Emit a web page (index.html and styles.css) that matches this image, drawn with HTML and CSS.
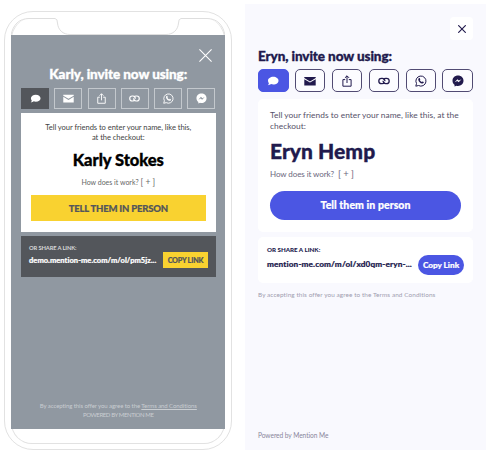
FILE: index.html
```html
<!DOCTYPE html>
<html lang="en">
<head>
<meta charset="utf-8">
<title>Invite friends</title>
<link rel="stylesheet" href="styles.css">
</head>
<body>
<svg class="defs" width="0" height="0" aria-hidden="true">
  <symbol id="chat" viewBox="0 0 12 12"><path fill="currentColor" d="M6.3 1.8C9.200 1.800 11.500 3.500 11.500 5.700S9.200 9.500 6.300 9.500C5.500 9.500 4.700 9.400 4 9.100C3.200 9.800 2 10.300.8 10.300C1.500 9.700 1.900 8.900 1.900 8.200C1.300 7.500 1 6.600 1 5.700C1 3.500 3.400 1.800 6.300 1.800Z"/></symbol>
  <symbol id="mail" viewBox="0 0 12 12"><path fill="currentColor" d="M.3 1.900H11.700V3L6 6.400L.3 3ZM.3 4.200L6 7.600L11.700 4.200V10.400H.3Z"/></symbol>
  <symbol id="share" viewBox="0 0 12 12"><path fill="none" stroke="currentColor" stroke-width="1" d="M4.200 4.600H1.900V11.200H10.100V4.600H7.800M6 8V.9M3.900 2.900L6 .8L8.100 2.900"/></symbol>
  <symbol id="link" viewBox="0 0 12 12"><g fill="none" stroke="currentColor" stroke-width="1.300"><path d="M6.700 7.600C6.100 8.400 5.200 8.700 4.100 8.700H3.500A2.700 2.700 0 0 1 3.500 3.300H4.300A2.700 2.700 0 0 1 6.900 6.200"/><path d="M5.300 4.400C5.900 3.600 6.800 3.300 7.900 3.300H8.500A2.700 2.700 0 0 1 8.500 8.700H7.700A2.700 2.700 0 0 1 5.100 5.800"/></g></symbol>
  <symbol id="whatsapp" viewBox="0 0 12 12"><path fill="none" stroke="currentColor" stroke-width="1" d="M.8 11.200L1.500 8.500A5.050 5.050 0 1 1 3.500 10.500Z"/><path fill="currentColor" d="M4.100 3.100H4.700L5.300 4.500L4.800 5.200C5.200 6 5.900 6.700 6.800 7.100L7.400 6.400L8.800 7.100C8.800 8.200 8 8.600 7.200 8.500C5.300 8.200 3.700 6.600 3.300 4.900C3.200 4.100 3.600 3.400 4.100 3.100Z"/></symbol>
  <symbol id="messenger" viewBox="0 0 12 12"><path fill="currentColor" fill-rule="evenodd" d="M6 .5C9.100.500 11.500 2.700 11.500 5.700S9.100 10.900 6 10.900C5.400 10.900 4.900 10.800 4.400 10.700L2.600 11.500L2.500 9.700C1.200 8.700.5 7.300.5 5.700C.5 2.700 2.900.500 6 .5ZM2.600 7.300L5.200 5.900L6.700 7.300L9.500 4.300L6.900 5.600L5.400 4.200Z"/></symbol>
  <symbol id="close" viewBox="0 0 12 12"><path fill="none" stroke="currentColor" d="M.4.4L11.600 11.600M11.600.4L.4 11.600"/></symbol>
</svg>

<main class="stage">
  <div class="phone">
    <div class="bezel">
      <svg class="notch" viewBox="0 0 214 17" width="214" height="17"><path fill="none" stroke="#dedede" d="M0 17C2 7 8 .5 18 .5H44Q46.500.800 46.500 5C47 12 52 16.500 59 16.500H155C162 16.500 167 12 167.500 5Q167.500.800 170 .5H196C206 .5 212 7 214 17"/></svg>
      <section class="offer offer-classic">
        <svg class="close"><use href="#close"/></svg>
        <h1 class="title">Karly, invite now using:</h1>
        <nav class="tabs">
          <span class="tab active"><svg><use href="#chat"/></svg></span>
          <span class="tab"><svg><use href="#mail"/></svg></span>
          <span class="tab"><svg><use href="#share"/></svg></span>
          <span class="tab"><svg><use href="#link"/></svg></span>
          <span class="tab"><svg><use href="#whatsapp"/></svg></span>
          <span class="tab"><svg><use href="#messenger"/></svg></span>
        </nav>
        <div class="card">
          <p class="intro">Tell your friends to enter your name, like this,<br>at the checkout:</p>
          <h2 class="name">Karly Stokes</h2>
          <p class="how">How does it work?<span class="plus">[ + ]</span></p>
          <div class="cta">TELL THEM IN PERSON</div>
        </div>
        <div class="linkbox">
          <div class="linktext">
            <p class="label">OR SHARE A LINK:</p>
            <p class="url">demo.mention-me.com/m/ol/pm5jz...</p>
          </div>
          <div class="copy">COPY LINK</div>
        </div>
        <footer class="legal">
          <p>By accepting this offer you agree to the <u>Terms and Conditions</u></p>
          <p class="powered">POWERED BY MENTION ME</p>
        </footer>
      </section>
    </div>
  </div>

  <section class="offer offer-modern">
    <div class="closebox"><svg class="close"><use href="#close"/></svg></div>
    <h1 class="title">Eryn, invite now using:</h1>
    <nav class="tabs">
      <span class="tab active"><svg><use href="#chat"/></svg></span>
      <span class="tab"><svg><use href="#mail"/></svg></span>
      <span class="tab"><svg><use href="#share"/></svg></span>
      <span class="tab"><svg><use href="#link"/></svg></span>
      <span class="tab"><svg><use href="#whatsapp"/></svg></span>
      <span class="tab"><svg><use href="#messenger"/></svg></span>
    </nav>
    <div class="card">
      <p class="intro">Tell your friends to enter your name, like this, at the<br>checkout:</p>
      <h2 class="name">Eryn Hemp</h2>
      <p class="how">How does it work?<span class="plus">[ + ]</span></p>
      <div class="cta">Tell them in person</div>
    </div>
    <div class="linkbox">
      <div class="linktext">
        <p class="label">OR SHARE A LINK:</p>
        <p class="url">mention-me.com/m/ol/xd0qm-eryn-...</p>
      </div>
      <div class="copy">Copy Link</div>
    </div>
    <p class="legal">By accepting this offer you agree to the Terms and Conditions</p>
    <p class="powered">Powered by Mention Me</p>
  </section>
</main>
</body>
</html>
```
FILE: styles.css
```css
* { box-sizing: border-box; }
body { margin: 0; background: #fff; font-family: Lato, "Open Sans", sans-serif; }
h1, h2, p { margin: 0; white-space: nowrap; }
.defs { display: block; }
.stage { display: flex; align-items: flex-start; height: 463px; overflow: hidden; }

.phone {
  width: 228px; height: 439px; margin: 11px 13px 0 4px; padding: 5.5px;
  border: 1px solid #e2e2e2; border-radius: 29px;
}
.bezel {
  width: 214px; height: 426px; border: 1px solid #e2e2e2; border-top: 0;
  border-radius: 21px;
}
.notch { display: block; margin-left: -1px; }

.offer { display: flex; flex-direction: column; }
.tabs { display: flex; justify-content: space-between; }
.tab { display: flex; align-items: center; justify-content: center; }
.cta, .copy { display: flex; align-items: center; justify-content: center; white-space: nowrap; }
.how { display: flex; align-items: center; }
.linkbox { display: flex; justify-content: space-between; }
.title, .name { font-weight: 900; -webkit-text-stroke: .35px currentColor; }
.url, .cta, .copy { -webkit-text-stroke: .2px currentColor; }

.offer-classic {
  width: 213.500px; height: 394px; margin: 0 0 0 -0.500px; padding: 14px 9px 9px 10px;
  background: #9098a1; color: #fff;
}
.offer-classic .close { width: 13px; height: 13px; margin-right: 4px; align-self: flex-end; }
.offer-classic .title { margin-top: 4px; font-size: 13.500px; line-height: 16px; text-align: center; letter-spacing: -.08px; }
.offer-classic .tabs { margin-top: 6px; }
.offer-classic .tab { width: 28px; height: 21px; border: 1px solid #c3c8cd; }
.offer-classic .tab svg { width: 11px; height: 11px; }
.offer-classic .active { background: #53565b; border-color: #53565b; }
.offer-classic .card {
  height: 119px; margin-top: 4px; padding: 10.700px 10px 0; background: #fff;
  color: #444; text-align: center;
}
.offer-classic .intro { font-size: 7.600px; line-height: 9.800px; letter-spacing: -.06px; }
.offer-classic .name { margin-top: 7px; font-size: 16.500px; line-height: 20px; color: #000; letter-spacing: -.05px; }
.offer-classic .how { justify-content: center; gap: 2px; margin-top: 6px; font-size: 7px; line-height: 12px; color: #666; }
.offer-classic .plus { font-size: 8.500px; }
.offer-classic .cta {
  height: 25.500px; margin-top: 7.700px; background: #f9d230; color: #53565b;
  font-size: 9.500px; font-weight: 900; letter-spacing: -.2px;
}
.offer-classic .linkbox { height: 40.500px; margin-top: 4.500px; padding: 7.900px 7.500px 0 8px; background: #53565b; }
.offer-classic .label { font-size: 5.800px; font-weight: 700; line-height: 8px; letter-spacing: -.14px; color: #d6d7d9; }
.offer-classic .url { margin-top: 3.400px; font-size: 7.500px; font-weight: 900; line-height: 12px; letter-spacing: .04px; }
.offer-classic .copy {
  width: 45px; height: 16px; margin-top: 8.500px; background: #f9d230; color: #53565b;
  font-size: 7.200px; font-weight: 900; letter-spacing: -.2px;
}
.offer-classic .legal { margin-top: auto; font-size: 6px; line-height: 8.600px; text-align: center; color: #c9cdd1; letter-spacing: -.07px; }
.offer-classic .powered { letter-spacing: -.4px; }

.offer-modern {
  width: 241px; height: 446px; margin-top: 4px; padding: 13px 13px 10px;
  background: #f9f9fe; color: #211a4d;
}
.closebox { display: flex; align-items: center; justify-content: center; width: 23px; height: 23px; align-self: flex-end; background: #fff; border-radius: 4px; }
.offer-modern .close { width: 8px; height: 8px; stroke-width: 1.700; }
.offer-modern .title { margin-top: 8px; font-size: 13.500px; line-height: 16px; letter-spacing: -.08px; }
.offer-modern .tabs { margin-top: 5px; }
.offer-modern .tab { width: 30.500px; height: 23px; border: 1px solid #514b73; border-radius: 5px; background: #fcfcff; }
.offer-modern .tab svg { width: 12px; height: 12px; }
.offer-modern .tab.active { background: #4b56e3; border-color: #4b56e3; color: #fff; }
.offer-modern .card { height: 133.500px; margin-top: 6.500px; padding: 11.700px 12px 0; background: #fff; border-radius: 5px; }
.offer-modern .intro { font-size: 8.400px; line-height: 11.200px; letter-spacing: .02px; color: #565169; }
.offer-modern .name { margin-top: 6px; font-size: 21px; line-height: 24px; letter-spacing: .05px; }
.offer-modern .how { gap: 4px; margin-top: 5.300px; font-size: 8px; line-height: 12px; letter-spacing: -.08px; color: #6b677d; }
.offer-modern .plus { font-size: 9.500px; }
.offer-modern .cta {
  height: 29px; margin-top: 11.100px; border-radius: 15px; background: #4b56e3; color: #fff;
  font-size: 10.500px; font-weight: 900; letter-spacing: .06px;
}
.offer-modern .linkbox { height: 46px; margin-top: 5px; padding: 9.300px 9px 0; background: #fff; border-radius: 5px; }
.offer-modern .label { font-size: 6.200px; font-weight: 900; line-height: 8px; }
.offer-modern .url { margin-top: 3.300px; font-size: 8.200px; font-weight: 900; line-height: 12px; letter-spacing: .13px; }
.offer-modern .copy {
  width: 46px; height: 20px; margin-top: 8.700px; border-radius: 10px; background: #4b56e3; color: #fff;
  font-size: 8.200px; font-weight: 900;
}
.offer-modern .legal { margin-top: 6.700px; font-size: 6.400px; line-height: 9px; letter-spacing: .09px; color: #a09db0; }
.offer-modern .powered { margin-top: auto; font-size: 6.600px; line-height: 9px; letter-spacing: -.05px; color: #89869b; }
```
